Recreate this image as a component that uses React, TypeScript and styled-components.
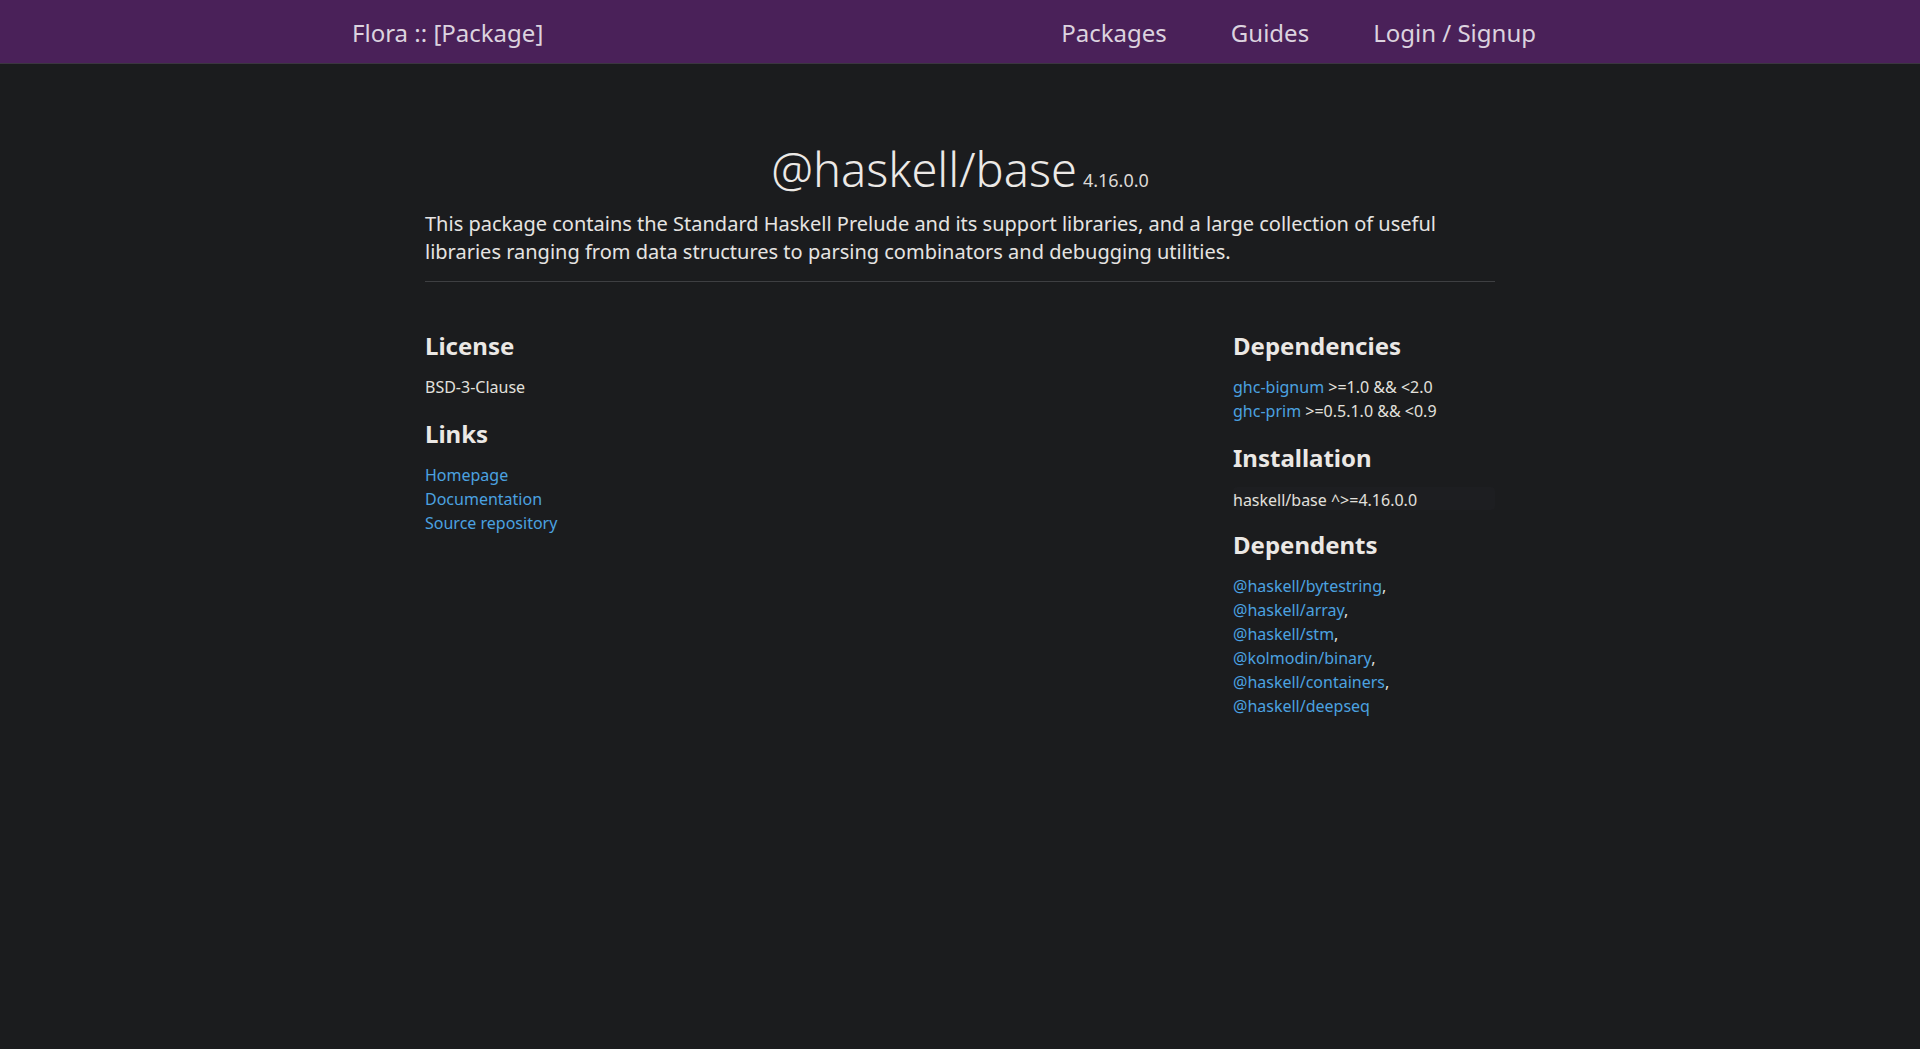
import React from "react";
import styled, { createGlobalStyle } from "styled-components";

const GlobalStyle = createGlobalStyle`
  html, body {
    margin: 0;
    padding: 0;
    background: #1b1c1e;
    color: #e6e4e2;
    font-family: "Noto Sans", "Open Sans", sans-serif;
  }
  * { box-sizing: border-box; }
  #root { min-height: 1049px; background: #1b1c1e; }
`;

const Header = styled.header`
  height: 64px;
  background: #4a2159;
  border-bottom: 1px solid #3b3640;
  display: flex;
  justify-content: center;
`;

const HeaderInner = styled.div`
  width: 1216px;
  display: flex;
  align-items: center;
  justify-content: space-between;
  padding-top: 2px;
`;

const Brand = styled.a`
  font-size: 24px;
  color: #dcd3df;
  text-decoration: none;
`;

const Nav = styled.nav`
  display: flex;
  gap: 64px;
  padding-right: 32px;
`;

const NavItem = styled.a`
  font-size: 24px;
  color: #dcd3df;
  text-decoration: none;
`;

const Main = styled.main`
  width: 1070px;
  margin: 0 auto;
  padding-top: 75px;
`;

const TitleRow = styled.div`
  display: flex;
  justify-content: center;
  align-items: baseline;
  gap: 6px;
`;

const Title = styled.h1`
  margin: 0;
  font-size: 47px;
  font-weight: 300;
  line-height: 60px;
  color: #ece9e6;
`;

const Version = styled.span`
  font-size: 18px;
  color: #dcd9d6;
`;

const Synopsis = styled.p`
  margin: 11px 0 0;
  font-size: 20px;
  line-height: 28px;
  color: #e6e4e2;
`;

const Divider = styled.hr`
  border: none;
  border-top: 1px solid #3e3f42;
  margin: 15px 0 0;
`;

const Columns = styled.div`
  display: grid;
  grid-template-columns: 1fr 262px;
  padding-top: 48px;
`;

const Column = styled.div`
  display: flex;
  flex-direction: column;
  gap: 19px;
`;

const Section = styled.section`
  display: flex;
  flex-direction: column;
  gap: 13px;
`;

const SectionTitle = styled.h2`
  margin: 0;
  font-size: 24px;
  line-height: 32px;
  font-weight: 700;
  color: #ebe8e5;
`;

const List = styled.ul`
  list-style: none;
  margin: 0;
  padding: 0;
  font-size: 16px;
  line-height: 24px;
`;

const Item = styled.li`
  color: #e2e0dd;
`;

const Link = styled.a`
  color: #4ba2e0;
  text-decoration: none;
`;

const Plain = styled.div`
  font-size: 16px;
  line-height: 24px;
  color: #e2e0dd;
`;

const Code = styled.div`
  font-size: 16px;
  line-height: 20px;
  padding-top: 3px;
  color: #e2e0dd;
  background: #1d1e21;
  border-radius: 4px;
`;

const dependents = [
  "@haskell/bytestring",
  "@haskell/array",
  "@haskell/stm",
  "@kolmodin/binary",
  "@haskell/containers",
  "@haskell/deepseq",
];

export default function App() {
  return (
    <>
      <GlobalStyle />
      <Header>
        <HeaderInner>
          <Brand href="#">Flora :: [Package]</Brand>
          <Nav>
            <NavItem href="#">Packages</NavItem>
            <NavItem href="#">Guides</NavItem>
            <NavItem href="#">Login / Signup</NavItem>
          </Nav>
        </HeaderInner>
      </Header>
      <Main>
        <TitleRow>
          <Title>@haskell/base</Title>
          <Version>4.16.0.0</Version>
        </TitleRow>
        <Synopsis>
          This package contains the Standard Haskell Prelude and its support libraries, and a large
          collection of useful libraries ranging from data structures to parsing combinators and
          debugging utilities.
        </Synopsis>
        <Divider />
        <Columns>
          <Column>
            <Section>
              <SectionTitle>License</SectionTitle>
              <Plain>BSD-3-Clause</Plain>
            </Section>
            <Section>
              <SectionTitle>Links</SectionTitle>
              <List>
                <Item><Link href="#">Homepage</Link></Item>
                <Item><Link href="#">Documentation</Link></Item>
                <Item><Link href="#">Source repository</Link></Item>
              </List>
            </Section>
          </Column>
          <Column>
            <Section>
              <SectionTitle>Dependencies</SectionTitle>
              <List>
                <Item><Link href="#">ghc-bignum</Link> &gt;=1.0 &amp;&amp; &lt;2.0</Item>
                <Item><Link href="#">ghc-prim</Link> &gt;=0.5.1.0 &amp;&amp; &lt;0.9</Item>
              </List>
            </Section>
            <Section>
              <SectionTitle>Installation</SectionTitle>
              <Code>haskell/base ^&gt;=4.16.0.0</Code>
            </Section>
            <Section>
              <SectionTitle>Dependents</SectionTitle>
              <List>
                {dependents.map((d, i) => (
                  <Item key={d}>
                    <Link href="#">{d}</Link>
                    {i < dependents.length - 1 ? "," : ""}
                  </Item>
                ))}
              </List>
            </Section>
          </Column>
        </Columns>
      </Main>
    </>
  );
}
